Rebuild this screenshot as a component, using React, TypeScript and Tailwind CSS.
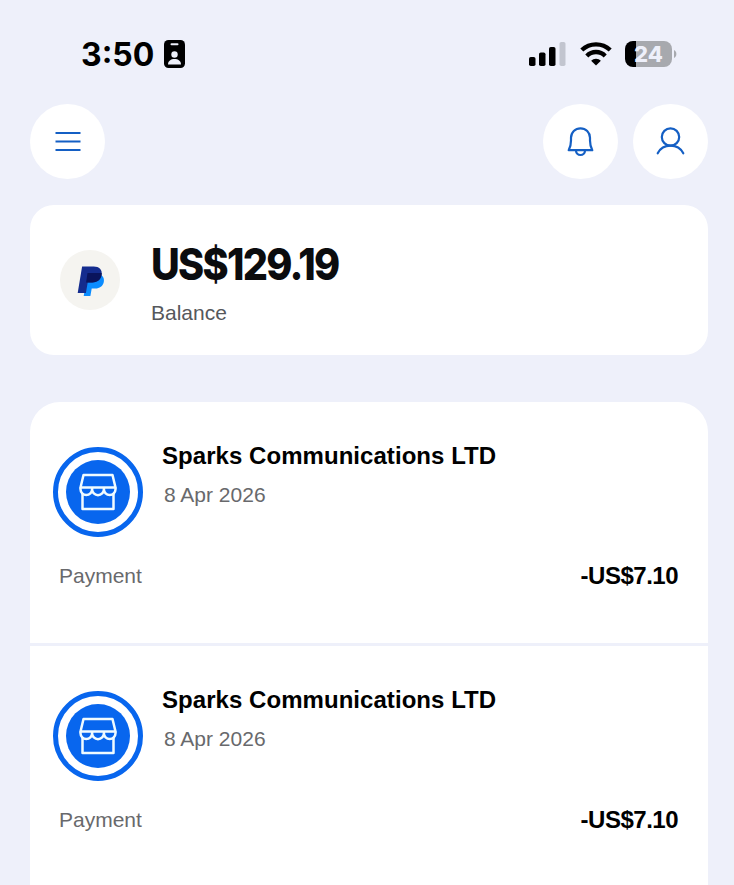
const transactions = [
  { id: 1, merchant: "Sparks Communications LTD", date: "8 Apr 2026", type: "Payment", amount: "-US$7.10" },
  { id: 2, merchant: "Sparks Communications LTD", date: "8 Apr 2026", type: "Payment", amount: "-US$7.10" },
]

function StatusBar() {
  return (
    <div className="flex h-[104px] items-center justify-between pt-1 pr-[57px] pl-[81px] font-['Inter',sans-serif]">
      <div className="flex items-center gap-[9px]">
        <span className="w-[74px] pt-[2px] text-[32px] leading-8 font-bold whitespace-nowrap text-black">3:50</span>
        <svg width="22" height="28" viewBox="0 0 22 28">
          <rect width="21" height="28" rx="4.5" fill="#000" />
          <rect x="6.5" y="3.2" width="8" height="2" rx="1" fill="#eef0fa" />
          <circle cx="10.5" cy="14.5" r="3.2" fill="#eef0fa" />
          <path d="M4 24.5c0-3.4 2.9-5.4 6.5-5.4s6.5 2 6.5 5.4z" fill="#eef0fa" />
        </svg>
      </div>
      <div className="flex items-center">
        <svg width="38" height="26" viewBox="0 0 38 26">
          <rect x="0" y="16" width="6.5" height="9" rx="1.8" />
          <rect x="10" y="11.5" width="6.5" height="13.5" rx="1.8" />
          <rect x="20" y="6" width="6.5" height="19" rx="1.8" />
          <rect x="30.5" y="1" width="6" height="24" rx="1.8" fill="#c2c5cf" />
        </svg>
        <svg width="32" height="24" viewBox="0 0 32 24" className="ml-[13px]">
          <g fill="none" stroke="#000" strokeWidth="4.3">
            <path d="M1.8 8a20.5 20.5 0 0 1 28.4 0" />
            <path d="M6.8 13.9a12.8 12.8 0 0 1 18.4 0" />
          </g>
          <path d="M16 23.5l-4.9-4.7a6.7 6.7 0 0 1 9.8 0z" />
        </svg>
        <div className="ml-[13px] flex items-center">
          <div className="flex h-[26px] w-[47px] items-center justify-center rounded-[8px] bg-linear-to-r from-black from-[24%] to-[#a7a9ae] to-[24%]">
            <span className="text-[22px] leading-6 font-extrabold text-[#eef0fa]">24</span>
          </div>
          <svg width="4" height="10" viewBox="0 0 4 10" className="ml-[1px]">
            <path d="M1 1c3.2 1.5 3.2 6.5 0 8z" fill="#a7a9ae" />
          </svg>
        </div>
      </div>
    </div>
  )
}

function Header() {
  return (
    <header className="flex justify-between">
      <button className="flex size-[75px] items-center justify-center rounded-full bg-white">
        <svg width="26" height="22" viewBox="0 0 26 22" stroke="#145fc4" strokeWidth="2.2">
          <path d="M.5 2h25M.5 10.500h25M.5 19h25" />
        </svg>
      </button>
      <div className="flex gap-[15px]">
        <button className="flex size-[75px] items-center justify-center rounded-full bg-white">
          <svg width="28" height="30" viewBox="0 0 28 30" fill="none" stroke="#145fc4" strokeWidth="2.2" strokeLinejoin="round">
            <path d="M1.7 23.2c1.7-3.1 2.3-5.5 2.3-9.7v-2.7a9.5 9.5 0 0 1 19 0v2.7c0 4.2.6 6.6 2.3 9.7z" />
            <path d="M9 23.5a4.5 4.5 0 0 0 9 0" />
          </svg>
        </button>
        <button className="flex size-[75px] items-center justify-center rounded-full bg-white">
          <svg width="30" height="30" viewBox="0 0 30 30" fill="none" stroke="#145fc4" strokeWidth="2.2" strokeLinecap="round">
            <circle cx="14.5" cy="10" r="8.7" />
            <path d="M1.7 26.3c2.5-4.8 7.200-7.6 12.8-7.6s10.3 2.8 12.8 7.6" />
          </svg>
        </button>
      </div>
    </header>
  )
}

function BalanceCard() {
  return (
    <section className="mt-[26px] flex h-[150px] items-center rounded-[24px] bg-white pl-[30px]">
      <div className="flex size-[60px] items-center justify-center rounded-full bg-[#f5f4f0]">
        <svg width="28" height="32" viewBox="0 0 28 32" className="mt-[2px] ml-[2px]">
          <path d="M10.5 9H22c3.6 1.1 5.6 4.2 4.8 8-.9 4.3-4.2 6.5-8.5 6.5h-3.6L13.4 31H6.7z" fill="#0a8cff" />
          <path d="M5.1 1.5h11.6c5.5 0 8.8 3.2 7.9 8.3-.9 5-4.5 7.700-9.5 7.700h-4.400L8.900 28H.7z" fill="#142c8e" />
          <path d="M10.5 8h14.2c.2 5.8-3.9 9.5-9.6 9.5H9.100z" fill="#0a145c" />
        </svg>
      </div>
      <div className="ml-[31px] flex flex-col pt-[2px]">
        <span className="origin-left scale-x-90 font-['Inter',sans-serif] text-[44px] leading-[52px] font-extrabold tracking-[-1.9px] whitespace-nowrap text-[#0b0c0e]">US$129.19</span>
        <span className="mt-[11px] text-[21px] leading-6 text-[#56585c]">Balance</span>
      </div>
    </section>
  )
}

function StoreBadge() {
  return (
    <div className="flex size-[90px] shrink-0 items-center justify-center rounded-full border-[5px] border-[#0866ee] bg-white">
      <div className="flex size-[64px] items-center justify-center rounded-full bg-[#0866ee]">
        <svg width="40" height="38" viewBox="0 0 40 38" fill="none" stroke="#f0fbff" strokeWidth="2.5" strokeLinejoin="round">
          <path d="M5.5 2h29l3 12.5h-35z" />
          <path d="M2.5 14.5v1.8a5.8 5.8 0 0 0 11.6 0 5.9 5.9 0 0 0 11.8 0 5.8 5.8 0 0 0 11.6 0v-1.8M14.1 14.5v2M25.9 14.5v2" />
          <path d="M4.5 20.5V36h31V20.5" />
        </svg>
      </div>
    </div>
  )
}

function TransactionRow({ merchant, date, type, amount }: { merchant: string; date: string; type: string; amount: string }) {
  return (
    <div className="h-[241px] bg-white pt-[38px] pr-[30px] pl-[23px]">
      <div className="flex">
        <div className="pt-[7px]">
          <StoreBadge />
        </div>
        <div className="ml-[19px] flex flex-col">
          <span className="text-[24px] leading-8 font-bold tracking-[0.05px] whitespace-nowrap text-black">{merchant}</span>
          <span className="mt-[11px] ml-[2px] text-[21px] leading-6 whitespace-nowrap text-[#68696c]">{date}</span>
        </div>
      </div>
      <div className="mt-[23px] flex h-8 items-center justify-between pl-[6px]">
        <span className="text-[21px] text-[#68696c]">{type}</span>
        <span className="text-[24px] font-bold tracking-[-0.5px] text-black">{amount}</span>
      </div>
    </div>
  )
}

export default function App() {
  return (
    <div className="h-[885px] w-[734px] overflow-hidden bg-[#eef0fa] font-['Liberation_Sans',sans-serif]">
      <StatusBar />
      <main className="pr-[26px] pl-[30px]">
        <Header />
        <BalanceCard />
        <section className="mt-[47px] flex flex-col gap-[3px] overflow-hidden rounded-t-[30px]">
          {transactions.map((t) => (
            <TransactionRow key={t.id} merchant={t.merchant} date={t.date} type={t.type} amount={t.amount} />
          ))}
        </section>
      </main>
    </div>
  )
}
